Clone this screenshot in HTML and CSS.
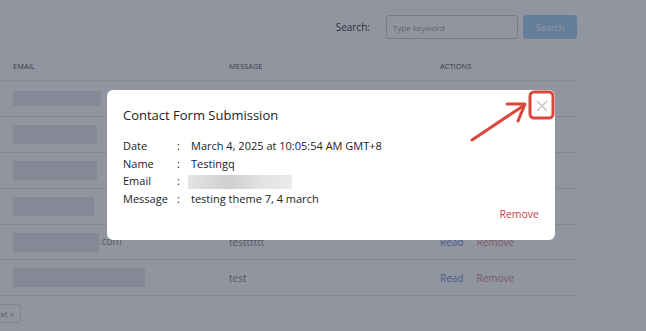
FILE: index.html
```html
<!DOCTYPE html>
<html>
<head>
  <meta charset="utf-8">
  <meta name="viewport" content="width=device-width, initial-scale=1">
  <title>Contact Form Submissions</title>
  <link rel="stylesheet" href="styles.css">
</head>
<body>
  <div class="page">
    <div class="toolbar">
      <label class="search-label" for="keyword">Search:</label>
      <input id="keyword" class="search-input" type="text" placeholder="Type keyword">
      <button class="search-btn">Search</button>
    </div>

    <table class="submissions">
      <thead>
        <tr>
          <th class="col-email">Email</th>
          <th class="col-message">Message</th>
          <th class="col-actions">Actions</th>
        </tr>
      </thead>
      <tbody>
        <tr>
          <td><span class="blur short" style="width:88px"></span></td>
          <td></td>
          <td></td>
        </tr>
        <tr>
          <td><span class="blur" style="width:84px"></span></td>
          <td></td>
          <td></td>
        </tr>
        <tr>
          <td><span class="blur" style="width:84px"></span></td>
          <td></td>
          <td></td>
        </tr>
        <tr>
          <td><span class="blur" style="width:81px"></span></td>
          <td></td>
          <td></td>
        </tr>
        <tr>
          <td><span class="blur" style="width:86px"></span>.com</td>
          <td>testttttt</td>
          <td><a class="link-read">Read</a><a class="link-remove">Remove</a></td>
        </tr>
        <tr>
          <td><span class="blur" style="width:132px"></span></td>
          <td>test</td>
          <td><a class="link-read">Read</a><a class="link-remove">Remove</a></td>
        </tr>
      </tbody>
    </table>

    <div class="pager">
      <button class="pager-btn">Next &raquo;</button>
    </div>
  </div>

  <div class="backdrop"></div>

  <div class="modal">
    <button class="modal-close" aria-label="Close">
      <svg width="12" height="12" viewBox="0 0 12 12"><path d="M1 1L11 11M11 1L1 11" stroke="#c9c9c9" stroke-width="1.6" fill="none"/></svg>
    </button>
    <h2 class="modal-title">Contact Form Submission</h2>
    <div class="details">
      <span class="key">Date</span><span class="sep">:</span><span class="val">March 4, 2025 at 10:05:54 AM GMT+8</span>
      <span class="key">Name</span><span class="sep">:</span><span class="val">Testingq</span>
      <span class="key">Email</span><span class="sep">:</span><span class="val"><span class="blur-email"></span></span>
      <span class="key">Message</span><span class="sep">:</span><span class="val">testing theme 7, 4 march</span>
    </div>
    <div class="modal-foot">
      <a class="modal-remove">Remove</a>
    </div>
  </div>

  <!-- annotation pointing at the close button -->
  <svg class="annotation" width="646" height="331" viewBox="0 0 646 331">
    <rect x="530" y="92" width="23" height="26" rx="4" fill="none" stroke="#d9473c" stroke-width="3"/>
    <path d="M472 140L523 106" stroke="#d9473c" stroke-width="3" stroke-linecap="round" fill="none"/>
    <path d="M507 104L525 104L518 121" stroke="#d9473c" stroke-width="3" stroke-linecap="round" stroke-linejoin="round" fill="none"/>
  </svg>
</body>
</html>
```

FILE: styles.css
```css
body {
  margin: 0;
  font-family: "Open Sans", "Liberation Sans", sans-serif;
  background: #fff;
  color: #333;
  width: 646px;
  height: 331px;
  overflow: hidden;
}

.page {
  width: 577px;
  padding-top: 15px;
}

.toolbar {
  display: flex;
  justify-content: flex-end;
  align-items: center;
  gap: 5px;
}

.search-label {
  font-size: 10px;
  font-weight: 500;
  color: #3a3a3a;
  margin-right: 11px;
}

.search-input {
  box-sizing: border-box;
  width: 132px;
  height: 24px;
  border: 1px solid #ccc;
  border-radius: 3px;
  padding: 0 6px;
  font-family: inherit;
  font-size: 8px;
  color: #444;
}

.search-input::placeholder {
  color: #999;
}

.search-btn {
  width: 54px;
  height: 24px;
  border: none;
  border-radius: 4px;
  background: #a9d4f5;
  color: #fff;
  font-family: inherit;
  font-size: 9px;
}

.submissions {
  width: 577px;
  border-collapse: collapse;
  margin-top: 17px;
}

.submissions th {
  text-align: left;
  font-size: 7.5px;
  font-weight: 500;
  color: #555;
  text-transform: uppercase;
  padding: 5px 13px 9px;
  border-bottom: 1px solid #eee;
}

.col-email { width: 190px; }
.col-message { width: 185px; }

.submissions td {
  height: 34.9px;
  padding: 0 13px;
  border-bottom: 1px solid #e6e6e6;
  font-size: 10px;
  color: #888;
  white-space: nowrap;
}

.blur {
  display: inline-block;
  vertical-align: middle;
  height: 19px;
  background: #e7e7ea;
}

.blur.short {
  height: 15px;
}

.link-read {
  color: #6d8ad4;
  margin-right: 13px;
}

.link-remove {
  color: #d48a8a;
}

.pager {
  padding-top: 4px;
  margin-left: -17px;
}

.pager-btn {
  border: 1px solid #ddd;
  background: #fff;
  border-radius: 3px;
  font-family: inherit;
  font-size: 8px;
  color: #888;
  padding: 3px 6px;
}

.backdrop {
  position: fixed;
  inset: 0;
  background: rgba(30, 39, 61, 0.49);
}

.modal {
  position: fixed;
  left: 107px;
  top: 90px;
  width: 448px;
  height: 150px;
  box-sizing: border-box;
  background: #fff;
  border-radius: 6px;
  padding: 16px 16px 0;
  display: flex;
  flex-direction: column;
}

.modal-close {
  position: absolute;
  right: 7px;
  top: 10px;
  border: none;
  background: none;
  padding: 0;
  width: 12px;
  height: 12px;
  display: flex;
}

.modal-title {
  margin: 0;
  font-size: 13px;
  font-weight: 500;
  color: #222;
}

.details {
  display: grid;
  grid-template-columns: 54px 14px auto;
  margin-top: 13px;
  font-size: 11px;
  line-height: 17.5px;
  color: #222;
}

.blur-email {
  display: inline-block;
  vertical-align: middle;
  width: 104px;
  height: 14px;
  margin-left: -3px;
  background: linear-gradient(90deg, #e4e4e4, #cfcfcf 40%, #e2e2e2 70%, #ececec);
}

.modal-foot {
  display: flex;
  justify-content: flex-end;
  margin-top: 0;
}

.modal-remove {
  color: #c9413f;
  font-size: 10.5px;
}

.annotation {
  position: fixed;
  left: 0;
  top: 0;
  pointer-events: none;
}
```
